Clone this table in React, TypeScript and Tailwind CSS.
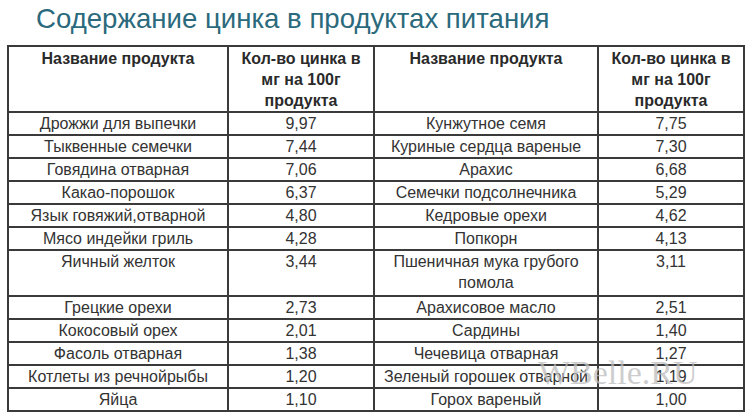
import * as React from 'react';

type Row = readonly [string, string, string, string];

const rows: readonly Row[] = [
  ['Дрожжи для выпечки', '9,97', 'Кунжутное семя', '7,75'],
  ['Тыквенные семечки', '7,44', 'Куриные сердца вареные', '7,30'],
  ['Говядина отварная', '7,06', 'Арахис', '6,68'],
  ['Какао-порошок', '6,37', 'Семечки подсолнечника', '5,29'],
  ['Язык говяжий,отварной', '4,80', 'Кедровые орехи', '4,62'],
  ['Мясо индейки гриль', '4,28', 'Попкорн', '4,13'],
  ['Яичный желток', '3,44', 'Пшеничная мука грубого помола', '3,11'],
  ['Грецкие орехи', '2,73', 'Арахисовое масло', '2,51'],
  ['Кокосовый орех', '2,01', 'Сардины', '1,40'],
  ['Фасоль отварная', '1,38', 'Чечевица отварная', '1,27'],
  ['Котлеты из речнойрыбы', '1,20', 'Зеленый горошек отварной', '1,19'],
  ['Яйца', '1,10', 'Горох вареный', '1,00'],
];

const cell = 'border-2 border-[#3a3a3a] px-[2px] align-top text-center';

function AmountHeader() {
  return (
    <th className={`${cell} pt-[1px]`}>
      Кол-во цинка в
      <br />
      мг на 100г
      <br />
      продукта
    </th>
  );
}

export default function App() {
  return (
    <div className="relative h-[412px] w-[750px] overflow-hidden bg-white font-['Liberation_Sans',Arial,sans-serif] text-[#333]">
      <h1 className="h-[45px] pl-[36px] pt-[1px] text-[27.6px] leading-[36px] text-[#2b6a7c]">
        Содержание цинка в продуктах питания
      </h1>
      <table className="ml-[7px] w-[736px] table-fixed border-collapse">
        <colgroup>
          <col className="w-[220px]" />
          <col className="w-[146px]" />
          <col className="w-[224px]" />
          <col className="w-[146px]" />
        </colgroup>
        <thead>
          <tr className="h-[65px] text-[16px] font-bold leading-[21px] text-[#2a2a2a]">
            <th className={`${cell} pt-[1px]`}>Название продукта</th>
            <AmountHeader />
            <th className={`${cell} pt-[1px]`}>Название продукта</th>
            <AmountHeader />
          </tr>
        </thead>
        <tbody className="text-[16px] leading-[21px]">
          {rows.map((row) => (
            <tr key={row[0]} className={row[2].length > 26 ? 'h-[46px]' : 'h-[23px]'}>
              {row.map((value, index) => (
                <td key={index} className={cell}>
                  {value}
                </td>
              ))}
            </tr>
          ))}
        </tbody>
      </table>
      <div className="pointer-events-none absolute left-[538px] top-[356px] font-['Liberation_Serif',serif] text-[34px] leading-none text-[#bdbdbd]/75">
        WBelle.RU
      </div>
    </div>
  );
}
